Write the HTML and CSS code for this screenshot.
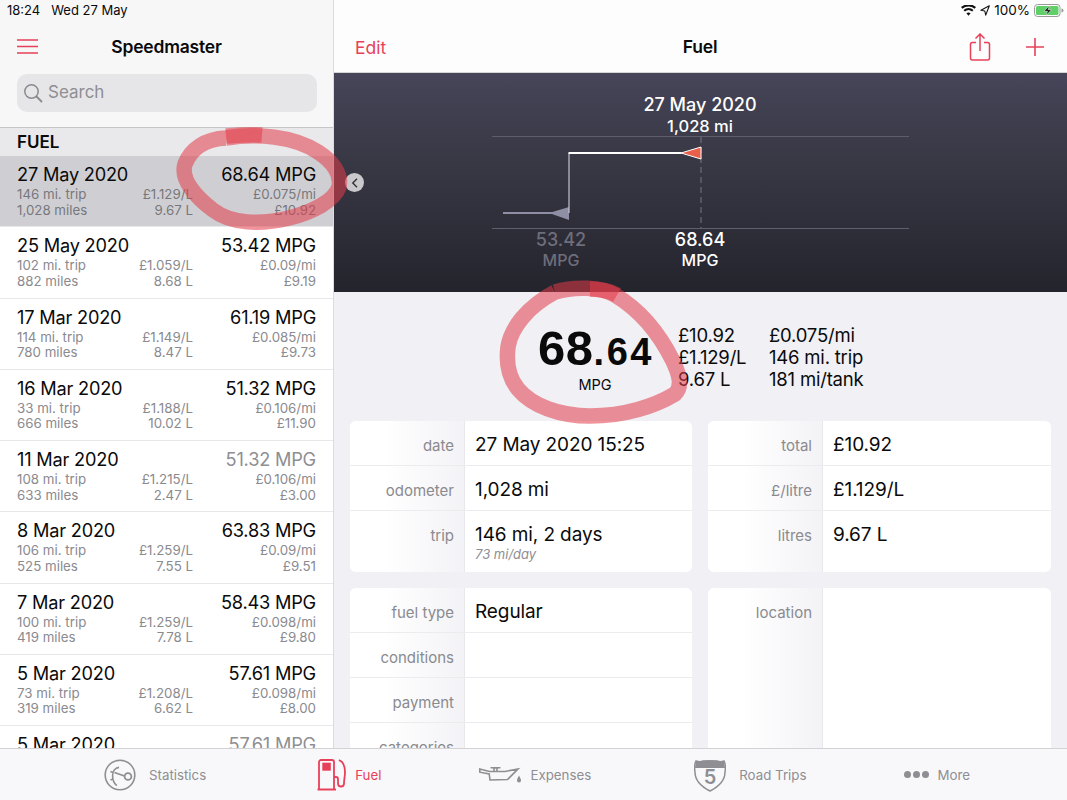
FILE: index.html
```html
<!doctype html>
<html>
<head>
<meta charset="utf-8">
<title>Speedmaster - Fuel</title>
<link rel="stylesheet" href="styles.css">
</head>
<body>
<div class="app">
  <div class="panes">
    <!-- left list -->
    <div class="side">
      <div class="status"><span>18:24</span><span class="status-date">Wed 27 May</span></div>
      <div class="nav side-nav">
        <svg class="burger" width="22" height="15" viewBox="0 0 22 15"><path d="M0 1h21M0 7.500h21M0 14h21" fill="none" stroke="#e8405a" stroke-width="1.600"/></svg>
        <span class="nav-title">Speedmaster</span>
      </div>
      <div class="search">
        <svg width="20" height="20" viewBox="0 0 20 20"><circle cx="8.5" cy="8.5" r="6.7" fill="none" stroke="#8a8a8f" stroke-width="1.5"/><path d="M13.5 13.5l5 5" stroke="#8a8a8f" stroke-width="1.8" stroke-linecap="round"/></svg>
        <span>Search</span>
      </div>
      <div class="section">FUEL</div>
      <div class="list">
        <div class="row selected">
          <div class="title">27 May 2020</div><div class="mpg">68.64 MPG</div>
          <div>146 mi. trip</div><div class="mid">£1.129/L</div><div class="end">£0.075/mi</div>
          <div>1,028 miles</div><div class="mid">9.67 L</div><div class="end">£10.92</div>
        </div>
        <div class="row">
          <div class="title">25 May 2020</div><div class="mpg">53.42 MPG</div>
          <div>102 mi. trip</div><div class="mid">£1.059/L</div><div class="end">£0.09/mi</div>
          <div>882 miles</div><div class="mid">8.68 L</div><div class="end">£9.19</div>
        </div>
        <div class="row">
          <div class="title">17 Mar 2020</div><div class="mpg">61.19 MPG</div>
          <div>114 mi. trip</div><div class="mid">£1.149/L</div><div class="end">£0.085/mi</div>
          <div>780 miles</div><div class="mid">8.47 L</div><div class="end">£9.73</div>
        </div>
        <div class="row">
          <div class="title">16 Mar 2020</div><div class="mpg">51.32 MPG</div>
          <div>33 mi. trip</div><div class="mid">£1.188/L</div><div class="end">£0.106/mi</div>
          <div>666 miles</div><div class="mid">10.02 L</div><div class="end">£11.90</div>
        </div>
        <div class="row">
          <div class="title">11 Mar 2020</div><div class="mpg partial">51.32 MPG</div>
          <div>108 mi. trip</div><div class="mid">£1.215/L</div><div class="end">£0.106/mi</div>
          <div>633 miles</div><div class="mid">2.47 L</div><div class="end">£3.00</div>
        </div>
        <div class="row">
          <div class="title">8 Mar 2020</div><div class="mpg">63.83 MPG</div>
          <div>106 mi. trip</div><div class="mid">£1.259/L</div><div class="end">£0.09/mi</div>
          <div>525 miles</div><div class="mid">7.55 L</div><div class="end">£9.51</div>
        </div>
        <div class="row">
          <div class="title">7 Mar 2020</div><div class="mpg">58.43 MPG</div>
          <div>100 mi. trip</div><div class="mid">£1.259/L</div><div class="end">£0.098/mi</div>
          <div>419 miles</div><div class="mid">7.78 L</div><div class="end">£9.80</div>
        </div>
        <div class="row">
          <div class="title">5 Mar 2020</div><div class="mpg">57.61 MPG</div>
          <div>73 mi. trip</div><div class="mid">£1.208/L</div><div class="end">£0.098/mi</div>
          <div>319 miles</div><div class="mid">6.62 L</div><div class="end">£8.00</div>
        </div>
        <div class="row">
          <div class="title">5 Mar 2020</div><div class="mpg partial">57.61 MPG</div>
        </div>
      </div>
    </div>

    <!-- detail -->
    <div class="main">
      <div class="status status-right">
        <svg width="15" height="11" viewBox="0 0 15 11"><path d="M7.5 10.8L5.4 8.3a3.2 3.2 0 0 1 4.2 0zM3.9 6.6L2.5 5a7.6 7.6 0 0 1 10 0l-1.4 1.6a5.5 5.5 0 0 0-7.2 0zM1.4 3.7L0 2.1a11.4 11.4 0 0 1 15 0l-1.4 1.6a9.3 9.3 0 0 0-12.2 0z" fill="#111"/></svg>
        <svg class="locate" width="10" height="11" viewBox="0 0 10 11"><path d="M9.3.8L.9 5.2l3.9.8.9 4.1z" fill="none" stroke="#111" stroke-width="1.1" stroke-linejoin="round"/></svg>
        <span class="pct">100%</span>
        <svg width="30" height="13" viewBox="0 0 30 13"><rect x=".5" y=".5" width="25.500" height="12" rx="3" fill="none" stroke="#9a9a9a"/><rect x="2" y="2" width="22.500" height="9" rx="1.500" fill="#5fd068"/><path d="M27.500 4.500a2 2 0 0 1 0 4z" fill="#9a9a9a"/><path d="M15.500 1.500L10 7.300h3.500l-1.500 4.200 5.500-5.800H14z" fill="#111" stroke="#fff" stroke-width=".5"/></svg>
      </div>
      <div class="nav main-nav">
        <span class="edit">Edit</span>
        <span class="nav-title">Fuel</span>
        <svg class="share" width="22" height="28" viewBox="0 0 22 28"><path d="M7 9.500H3.500a2 2 0 0 0-2 2V25a2 2 0 0 0 2 2h15a2 2 0 0 0 2-2V11.500a2 2 0 0 0-2-2H15M11 18V1.500M6.500 5.500L11 1l4.500 4.500" fill="none" stroke="#e8405a" stroke-width="1.500"/></svg>
        <svg class="plus" width="18" height="18" viewBox="0 0 18 18"><path d="M9 0v18M0 9h18" fill="none" stroke="#e8405a" stroke-width="1.600"/></svg>
      </div>

      <div class="chart">
        <svg width="733" height="219" viewBox="334 73 733 219">
          <path class="grid-line" d="M492 136.500h417M492 228.500h417"/>
          <path class="dash" d="M701 137v91"/>
          <path class="prev-line" d="M503 213h66"/>
          <path class="prev-flag" d="M549 213l20-6v13z"/>
          <path class="riser" d="M569 213V153"/>
          <path class="step" d="M568.500 153h113"/>
          <path class="flag" d="M681 153l20-6v12z"/>
          <text class="c-date" x="700" y="111">27 May 2020</text>
          <text class="c-odo" x="700" y="132">1,028 mi</text>
          <text class="c-val dim" x="561" y="246">53.42</text>
          <text class="c-unit dim" x="561" y="266">MPG</text>
          <text class="c-val" x="700" y="246">68.64</text>
          <text class="c-unit" x="700" y="266">MPG</text>
        </svg>
      </div>

      <div class="detail">
        <div class="summary">
          <div class="big">
            <div class="big-num">68<small>.64</small></div>
            <div class="big-unit">MPG</div>
          </div>
          <div class="facts">
            <div>£10.92<br>£1.129/L<br>9.67 L</div>
            <div>£0.075/mi<br>146 mi. trip<br>181 mi/tank</div>
          </div>
        </div>
        <div class="cards">
          <div class="card">
            <div class="field"><label>date</label><div class="val">27 May 2020 15:25</div></div>
            <div class="field"><label>odometer</label><div class="val">1,028 mi</div></div>
            <div class="field tall"><label>trip</label><div class="val">146 mi, 2 days<em>73 mi/day</em></div></div>
          </div>
          <div class="card">
            <div class="field"><label>total</label><div class="val">£10.92</div></div>
            <div class="field"><label>£/litre</label><div class="val">£1.129/L</div></div>
            <div class="field tall"><label>litres</label><div class="val">9.67 L</div></div>
          </div>
          <div class="card">
            <div class="field"><label>fuel type</label><div class="val">Regular</div></div>
            <div class="field"><label>conditions</label><div class="val"></div></div>
            <div class="field"><label>payment</label><div class="val"></div></div>
            <div class="field"><label>categories</label><div class="val"></div></div>
          </div>
          <div class="card">
            <div class="field location"><label>location</label><div class="val"></div></div>
          </div>
        </div>
      </div>
    </div>
  </div>

  <div class="tabs">
    <div class="tab">
      <svg width="32" height="32" viewBox="0 0 32 32" fill="none" stroke="#8e8e93" stroke-width="1.600"><circle cx="16" cy="16" r="14.800"/><path d="M15 8.400c-4 .4-6.400 4-6.400 8.300 0 4 1.600 7.800 4.200 10"/><path d="M6.500 12.500l2.500 1M6.500 21l2.500-1"/><path d="M10.500 13.500l10 3.500" stroke-width="1.800"/><circle cx="24" cy="17.500" r="3.400" stroke-width="1.800"/></svg>
      <span>Statistics</span>
    </div>
    <div class="tab on tab-fuel">
      <svg width="29" height="32" viewBox="0 0 29 32" fill="none" stroke="#e8405a" stroke-width="1.800"><path d="M.5 30.500h18.500M2 30.500V3a2 2 0 0 1 2-2h11a2 2 0 0 1 2 2v27.500"/><rect x="5.300" y="3.700" width="8.500" height="8" fill="#e8405a" stroke="none"/><path d="M17 18h2a2 2 0 0 1 2 2v4.500a3 3 0 0 0 6 0c0-4 1-7 1-11s-1-8-3-10.500l-3-2"/></svg>
      <span>Fuel</span>
    </div>
    <div class="tab">
      <svg width="42" height="20" viewBox="0 0 42 20" fill="none" stroke="#8e8e93" stroke-width="1.600"><path d="M.8 4l9.700 2.500H26l13-2.500-10.500 10.500-17.500.5-.8-6L.8 7.200z"/><path d="M15 6.500V3h3v3.500M11.500 2.800h10"/><path d="M40 10.500c-1 2-2 3.500-2 5a2 2 0 0 0 4 0c0-1.500-1-3-2-5z" fill="#8e8e93" stroke="none"/></svg>
      <span>Expenses</span>
    </div>
    <div class="tab tab-trips">
      <svg width="32" height="34" viewBox="0 0 32 34">
        <path d="M2 3c3 1 5 1 7 0h14c2 1 5 1 7 0 2 4 1.500 8 1 11 0 9-7 15-15 19C8 29 1 23 1 14 .5 11 0 7 2 3z" fill="none" stroke="#8e8e93" stroke-width="1.500"/>
        <path d="M2 3c3 1 5 1 7 0 2-1 12-1 14 0 2 1 5 1 7 0l1 7H1z" fill="#8e8e93"/>
        <text class="shield-num" x="16" y="26">5</text>
      </svg>
      <span>Road Trips</span>
    </div>
    <div class="tab">
      <span class="dots"><i></i><i></i><i></i></span>
      <span>More</span>
    </div>
  </div>
</div>

<!-- hide/show button sitting on the split line -->
<div class="chevron"><svg width="8" height="10" viewBox="0 0 8 10"><path d="M6 .8L1.800 5 6 9.200" fill="none" stroke="#333" stroke-width="1.400"/></svg></div>

<!-- hand drawn markup on top of the screenshot -->
<svg class="scribble" width="1067" height="800" viewBox="0 0 1067 800">
  <path d="M226 138c30-5 68-2 92 14 14 9 24 22 21 35-5 14-26 25-50 31-28 7-58 6-76-8-16-12-33-30-28-46 6-15 20-25 41-26"/>
  <path d="M226 136c12-1 24-2 36-1"/>
  <path d="M555 292c20-6 46-5 60 3 25 15 45 40 58 66 6 13 10 25 2 33-20 12-50 22-85 22-30 0-58-10-72-27-9-11-12-26-10-42 3-19 19-40 47-55"/>
  <path d="M590 289c10 0 20 2 27 6"/>
</svg>
</body>
</html>
```

FILE: styles.css
```css
* { box-sizing: border-box; }
html, body { margin: 0; height: 100%; }
body { width: 1067px; height: 800px; overflow: hidden; position: relative; font-family: Inter, "Liberation Sans", sans-serif; color: #0a0a0a; background: #fff; }

.app { display: flex; flex-direction: column; height: 800px; }
.panes { display: flex; flex: 1; min-height: 0; }

.status { height: 26px; flex: none; font-size: 13px; line-height: 20px; padding-left: 7px; display: flex; }
.status-date { margin-left: 11px; }
.status-right { justify-content: flex-end; align-items: center; gap: 4px; padding: 0 3px 6px 0; }
.pct { font-size: 13.500px; }

.nav { height: 46px; flex: none; display: flex; align-items: center; position: relative; padding-bottom: 6px; }
.nav-title { font-size: 17.500px; font-weight: 600; flex: 1; text-align: center; letter-spacing: -.2px; }

/* list pane */
.side { width: 334px; flex: none; background: #fff; border-right: 1px solid #dcdce0; display: flex; flex-direction: column; overflow: hidden; }
.side .status, .side-nav { background: #f7f7f8; }
.side-nav { padding: 0 17px 6px; }
.side-nav .nav-title { margin-right: 21px; padding-right: 1px; }
.search { background: #f7f7f8; flex: none; height: 55px; display: flex; position: relative; }
.search::before { content: ""; position: absolute; left: 17px; right: 16px; top: 2px; height: 38px; background: #e6e6e9; border-radius: 10px; }
.search svg, .search span { position: relative; }
.search svg { margin: 11px 0 0 23px; }
.search span { color: #8e8e93; font-size: 17px; line-height: 38px; margin: 1px 0 0 5px; }

.section { height: 29px; flex: none; background: #e9e9eb; border-top: 1px solid #c6c6c8; padding-left: 17px; font-size: 17px; font-weight: 600; line-height: 28px; }

.row { height: 71.25px; padding: 6px 17px 0; display: grid; grid-template-columns: 116px 60px 1fr; grid-template-rows: 24px 15.500px 16px; font-size: 13.300px; color: #8a8a8f; line-height: 16px; border-bottom: 1px solid #e8e8ea; background: #fff; align-content: start; }
.row .title { grid-column: 1 / 3; font-size: 18.200px; line-height: 24px; color: #0a0a0a; letter-spacing: -.2px; }
.row .mpg { font-size: 18.200px; line-height: 24px; color: #0a0a0a; text-align: right; letter-spacing: -.2px; }
.row .mpg.partial { color: #8e8e93; }
.mid, .end { text-align: right; }
.row.selected { background: #cfcfd3; color: #77777c; }

/* detail pane */
.main { flex: 1; min-width: 0; display: flex; flex-direction: column; background: #f0f0f5; }
.main .status { background: #fdfdfe; }
.main-nav { background: #fdfdfe; padding: 0 23px 5px 21px; height: 47px; border-bottom: 1px solid #d5d5d8; }
.edit { color: #e8405a; font-size: 17.500px; width: 60px; position: relative; top: 1px; }
.main-nav .nav-title { position: absolute; left: 0; right: 0; top: -3px; line-height: 47px; padding-right: 1px; }
.share { margin-left: auto; margin-right: 35px; }

.chart { height: 219px; flex: none; background: linear-gradient(#46455a 0, #3c3b49 30%, #24242d 100%); position: relative; }
.chart svg { display: block; }
.grid-line { stroke: #5e5d6b; stroke-width: 1; fill: none; }
.dash { stroke: #777684; stroke-width: 1; stroke-dasharray: 6 4; fill: none; }
.prev-line { stroke: #8e8ea4; stroke-width: 2; fill: none; }
.prev-flag { fill: #8e8ea4; }
.riser { stroke: #c4c4cc; stroke-width: 1.200; fill: none; }
.step { stroke: #fff; stroke-width: 2; fill: none; }
.flag { fill: #e8604a; stroke: #fff; stroke-width: 1; }
.chart text { fill: #fff; text-anchor: middle; font-weight: 500; }
.c-date { font-size: 18px; }
.c-odo { font-size: 16.500px; }
.c-val { font-size: 18px; }
.c-unit { font-size: 16px; }
.chart text.dim { fill: #6e6e7a; }

.detail { flex: 1; min-height: 0; overflow: hidden; padding: 0 16px; }
.summary { display: flex; height: 129px; padding-top: 27px; }
.big { width: 328px; text-align: center; }
.big-num { font-family: "Liberation Sans", sans-serif; font-size: 49px; font-weight: 700; line-height: 58px; margin-left: 171px; width: 150px; letter-spacing: .5px; white-space: nowrap; }
.big-num small { font-size: 38px; font-weight: 700; letter-spacing: 2.500px; }
.big-unit { font-size: 14.500px; line-height: 20px; margin: -6px 0 0 170px; width: 150px; }
.facts { display: flex; font-size: 18.500px; line-height: 22px; letter-spacing: -.2px; padding-top: 5px; }
.facts div { width: 91px; white-space: nowrap; }

.cards { display: grid; grid-template-columns: 342px 343px; gap: 16px; }
.card { background: #fff; border-radius: 6px; overflow: hidden; }
.field { display: flex; height: 45px; border-bottom: 1px solid #ececef; }
.field:last-child { border-bottom: 0; }
.field.tall { height: 61px; }
.field.location { height: 200px; }
.field label { width: 115px; flex: none; background: linear-gradient(90deg, #fff 30%, #f3f3f7 100%); border-right: 1px solid #e8e8ec; color: #8a8a8f; font-size: 15px; text-align: right; padding: 15px 10px 0 0; line-height: 20px; }
.val { font-size: 19px; line-height: 24px; padding: 12px 0 0 10px; letter-spacing: -.1px; }
.val em { display: block; font-size: 13px; line-height: 14px; color: #8e8e93; letter-spacing: 0; }

/* tab bar */
.tabs { height: 52px; flex: none; background: #f8f8fa; border-top: 1px solid #d2d2d5; display: flex; align-items: center; gap: 98px; padding-left: 104px; position: relative; }
.tab { display: flex; align-items: center; gap: 13px; color: #8e8e93; font-size: 13.300px; }
.tab.on { color: #e8405a; }
.tab-fuel { margin-left: 13px; gap: 9px; }
.tab-fuel + .tab { gap: 9px; }
.tab-trips { margin-left: 5px; }
.shield-num { font-size: 20px; font-weight: 600; fill: #8e8e93; text-anchor: middle; }
.dots { display: flex; gap: 2px; margin-right: -5px; }
.dots i { width: 7px; height: 7px; border-radius: 50%; background: #8e8e93; }

/* overlays */
.chevron { position: absolute; left: 345px; top: 173px; width: 19px; height: 19px; border-radius: 50%; background: #c9c9cc; display: flex; align-items: center; justify-content: center; }
.scribble { position: absolute; left: 0; top: 0; pointer-events: none; }
.scribble path { fill: none; stroke: #e23c48; stroke-opacity: .55; stroke-width: 15.500; stroke-linecap: butt; stroke-linejoin: round; }
```
